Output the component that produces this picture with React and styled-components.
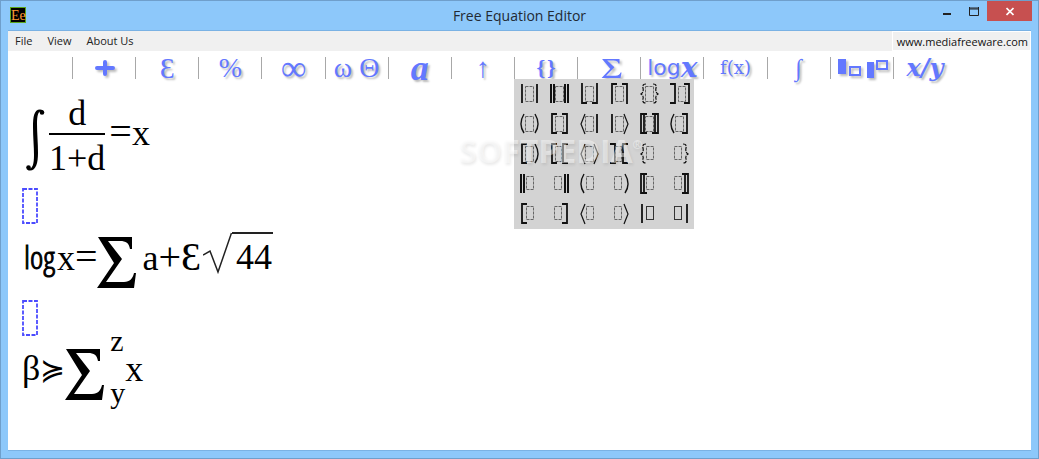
import React from "react";
import styled, { createGlobalStyle } from "styled-components";

const Global = createGlobalStyle`
  * { box-sizing: border-box; }
  html, body, #root { height: 100%; }
  body { margin: 0; font-family: "Open Sans", sans-serif; }
  button { font: inherit; }
`;

const Window = styled.div`
  min-height: 100%;
  display: flex;
  flex-direction: column;
  background: #8dc8fa;
  border: 1px solid #6f9fcb;
  padding: 0 7px 7px;
`;

const TitleBar = styled.header`
  display: grid;
  grid-template-columns: 1fr auto 1fr;
  height: 29px;
  flex: none;
`;

const AppIcon = styled.svg`
  margin: 6px 0 0 2px;
`;

const Title = styled.h1`
  margin: 0;
  font-size: 14px;
  font-weight: 400;
  line-height: 29px;
  color: #222a33;
`;

const WindowButtons = styled.div`
  display: flex;
  justify-content: flex-end;
  align-items: flex-start;
  margin-right: -1px;
`;

const WindowButton = styled.button`
  width: ${(p) => (p.$close ? 45 : 27)}px;
  height: 20px;
  padding: 0;
  border: 0;
  background: ${(p) => (p.$close ? "#c75050" : "transparent")};
  svg { display: block; margin: 0 auto; }
`;

const Client = styled.main`
  flex: 1;
  background: #fff;
  border: 1px solid #7ab2e4;
  border-width: 1px 0;
`;

const MenuBar = styled.nav`
  display: flex;
  gap: 1px;
  height: 20px;
  background: #f0f0f0;
`;

const MenuButton = styled.button`
  border: 0;
  padding: 0 7px;
  background: none;
  font-size: 11px;
  line-height: 20px;
  color: #222;
`;

const SiteLink = styled.a`
  margin-left: auto;
  padding: 0 2px 0 4px;
  border: 1px solid #fff;
  font-size: 11px;
  line-height: 20px;
  color: #111;
  text-decoration: none;
`;

const ToolBar = styled.div`
  display: flex;
  padding: 6px 75px 0 64px;
`;

const ToolSlot = styled.div`
  position: relative;
  flex: 1 1 0;
  min-width: 0;
  border-left: 1px solid #a8a8a8;
`;

const ToolButton = styled.button`
  display: flex;
  align-items: center;
  justify-content: center;
  width: 100%;
  height: 22px;
  padding: 0;
  border: 0;
  background: none;
  color: #6378ff;
  svg { overflow: visible; filter: drop-shadow(2px 2px 1px #0004); }
`;

const ToolText = styled.span`
  font-family: ${(p) => p.$font || '"Liberation Serif"'}, serif;
  font-size: ${(p) => p.$size || 24}px;
  font-weight: ${(p) => (p.$bold ? 700 : 400)};
  font-style: ${(p) => (p.$italic ? "italic" : "normal")};
  line-height: 20px;
  white-space: nowrap;
  text-shadow: 2px 2px 2px #0004;
`;

const Palette = styled.div`
  position: absolute;
  z-index: 1;
  top: 100%;
  left: -1px;
  display: grid;
  grid-template-columns: repeat(6, 30px);
  background: #d3d3d3;
`;

const PaletteButton = styled.button`
  width: 30px;
  height: 30px;
  padding: 0;
  border: 0;
  background: none;
  svg { display: block; }
`;

const Watermark = styled.div`
  position: absolute;
  z-index: 2;
  top: 74px;
  left: -56px;
  font-family: "Open Sans", sans-serif;
  font-size: 32px;
  font-weight: 700;
  line-height: 40px;
  white-space: nowrap;
  color: #ffffff70;
  text-shadow: 1px 2px 3px #00000016;
  pointer-events: none;
  sup { font-size: 12px; line-height: 12px; vertical-align: 14px; }
`;

const Sheet = styled.section`
  display: flex;
  flex-direction: column;
  align-items: flex-start;
  padding: 7px 14px;
  font-family: "Liberation Serif", serif;
  font-size: 36px;
  line-height: 36px;
  color: #000;
`;

const Equation = styled.div`
  display: flex;
  align-items: center;
  height: ${(p) => (p.$tall ? 102 : 76)}px;
  svg { display: block; flex: none; }
`;

const Term = styled.span`
  padding-bottom: 10px;
  white-space: nowrap;
`;

const Operator = styled.span`
  font-size: ${(p) => (p.$small ? 30 : 40)}px;
  line-height: 36px;
`;

const Fraction = styled.div`
  display: flex;
  flex-direction: column;
  align-items: center;
  margin: 0 4px 0 1px;
  line-height: 40px;
`;

const Denominator = styled.span`
  border-top: 2px solid #000;
  line-height: 46px;
`;

const Limits = styled.span`
  display: flex;
  flex-direction: column;
  justify-content: space-between;
  font-size: 30px;
  line-height: 30px;
  height: 96px;
  padding-bottom: 14px;
`;

const BigOperator = styled.svg`
  margin-right: 6px;
`;

const Root = styled.span`
  display: flex;
  height: 60px;
  padding-bottom: 18px;
  margin-left: 2px;
`;

const Radicand = styled.span`
  padding: 5px 1px 0 4px;
  border-top: 2px solid #222;
`;

const Log = styled.span`
  padding: 0 2px 10px;
  font-family: "Open Sans Condensed Light", "Open Sans Condensed", sans-serif;
  font-size: 32px;
  font-weight: 300;
  -webkit-text-stroke: 1px #000;
`;

const sigmaPath =
  "M1 0H35V12H33C32 6 29 4 23 4H11L25 22 9 45H27C33 45 36 41 37 36H39L37 51H0L17 26Z";

function Sigma() {
  return (
    <BigOperator width="39" height="51" viewBox="0 0 39 51" aria-label="sum">
      <path d={sigmaPath} />
    </BigOperator>
  );
}

function Placeholder() {
  return (
    <svg width="16" height="36" viewBox="0 0 16 36" aria-label="empty line">
      <rect x="1" y="1" width="14" height="34" fill="none" stroke="#4b4bff" strokeWidth="1.8" strokeDasharray="4 1.5" />
    </svg>
  );
}

const leftX = 8;
const rightX = 23;

function bracket(kind, x, side) {
  const s = side === "l" ? 1 : -1;
  switch (kind) {
    case "|":
      return <path d={`M${x} 5V24`} />;
    case "||":
      return <path d={`M${x - s} 5V24M${x + 2 * s} 5V24`} strokeWidth="2" />;
    case "[":
      return <path d={`M${x + 5} 5H${x}V24H${x + 5}`} />;
    case "]":
      return <path d={`M${x - 5} 5H${x}V24H${x - 5}`} />;
    case "floor":
      return <path d={`M${x} 4V24H${x + 5 * s}`} />;
    case "ceil":
      return <path d={`M${x} 25V5H${x + 5 * s}`} />;
    case "[[":
      return <path d={`M${x + 5 * s} 5H${x - s}V24H${x + 5 * s}M${x + 2 * s} 5V24`} />;
    case "(":
      return <path d={`M${x + 2 * s} 5Q${x - 4 * s} 15 ${x + 2 * s} 24`} strokeWidth="1.4" />;
    case "<":
      return <path d={`M${x + 3 * s} 5L${x - s} 15L${x + 3 * s} 25`} strokeWidth="1.2" />;
    default:
      return (
        <path
          d={`M${x + 4 * s} 5Q${x} 5 ${x + s} 9Q${x + 2 * s} 13 ${x - s} 15Q${x + 2 * s} 17 ${x + s} 20Q${x} 24 ${x + 4 * s} 24`}
          strokeWidth="1.2"
          strokeDasharray="4 1"
        />
      );
  }
}

const palette = [
  ["|", "|"], ["||", "||"], ["floor", "floor"], ["ceil", "ceil"], ["{", "{"], ["]", "]"],
  ["(", "("], ["[", "]"], ["<", "|"], ["|", "<"], ["[[", "[["], ["(", "]"],
  ["[", "("], ["[", "["], ["<", "<"], ["]", "["], ["{", null], [null, "{"],
  ["||", null], [null, "||"], ["(", null], [null, "("], ["[[", null], [null, "[["],
  ["[", null], [null, "]"], ["<", null], [null, "<"], ["|", null], [null, "|"],
];

function boxSpan(left, right) {
  if (!right) return [12.5, 7];
  if (!left) return [10.5, 7];
  if (left === "]" && right === "]") return [14.5, 7];
  if (right === "[") return [11.5, 6];
  return [11.5, 8];
}

function Fence({ left, right, solid }) {
  const both = left && right;
  const lx = left === "]" ? 11 : leftX;
  const rx = right === "[" ? 19 : left === "]" ? 25 : rightX;
  const [boxX, boxWidth] = boxSpan(left, right);
  return (
    <svg width="30" height="30" viewBox="0 0 30 30" fill="none" stroke="#111" strokeWidth="1.8">
      {left && bracket(left, lx, "l")}
      {right && bracket(right, rx, "r")}
      <rect
        x={boxX}
        y="7.5"
        width={boxWidth}
        height={both ? 15 : 13}
        stroke={solid ? "#333" : "#666"}
        strokeWidth="1"
        strokeDasharray={solid ? undefined : "3 1"}
      />
    </svg>
  );
}

function Plus() {
  return (
    <svg width="22" height="18" viewBox="0 0 22 18">
      <path d="M12 3V15M4 9H20" stroke="#6378ff" strokeWidth="4" strokeLinecap="round" />
    </svg>
  );
}

function SmallSigma() {
  return (
    <svg width="20" height="19" viewBox="-5 0 39 51" preserveAspectRatio="none">
      <path d={sigmaPath} fill="#6378ff" />
    </svg>
  );
}

function Boxes() {
  return (
    <svg width="50" height="20" viewBox="-1 0 50 20" fill="none" stroke="#6378ff" strokeWidth="2">
      <path d="M0 1H8V16H0ZM29 4H36V20H29Z" fill="#6378ff" stroke="none" />
      <rect x="12" y="9" width="10" height="8" />
      <rect x="39" y="3" width="10" height="8" />
    </svg>
  );
}

const tools = [
  ["Operators", <Plus />],
  ["Letters", <ToolText $size={30}>Ɛ</ToolText>],
  ["Percent", <ToolText $size={28}>%</ToolText>],
  ["Infinity", <ToolText $size={36}>∞</ToolText>],
  ["Greek", <ToolText $size={28}>ω Θ</ToolText>],
  ["Variables", <ToolText $size={36} $bold $italic>a</ToolText>],
  ["Arrows", <ToolText $size={28}>↑</ToolText>],
  ["Brackets", <ToolText $size={22} $bold>{"{\u200a}"}</ToolText>],
  ["Sums", <SmallSigma />],
  [
    "Logarithms",
    <>
      <ToolText $size={22} $font='"DejaVu Sans"'>log</ToolText>
      <ToolText $size={28} $bold $italic $font='"DejaVu Serif"'>x</ToolText>
    </>,
  ],
  ["Functions", <ToolText $size={18} $font='"DejaVu Serif"'>f(x)</ToolText>],
  ["Integrals", <ToolText $size={24} $italic>∫</ToolText>],
  ["Scripts", <Boxes />],
  ["Fractions", <ToolText $size={24} $bold $italic $font='"DejaVu Serif"'>x/y</ToolText>],
];

export default function App() {
  return (
    <>
      <Global />
      <Window>
        <TitleBar>
          <AppIcon width="16" height="16" viewBox="0 0 16 16">
            <rect x=".5" y=".5" width="15" height="15" fill="#000" stroke="#5ba51a" />
            <text x="1" y="13" fontFamily="Liberation Serif, serif" fontSize="14" fill="#ff9a35">Ee</text>
          </AppIcon>
          <Title>Free Equation Editor</Title>
          <WindowButtons>
            <WindowButton aria-label="Minimize">
              <svg width="8" height="20"><path d="M0 13H8" stroke="#222" strokeWidth="2" /></svg>
            </WindowButton>
            <WindowButton aria-label="Maximize">
              <svg width="10" height="20"><path d="M.5 6V14.500H9.500V6M0 7H10M0 8H10" fill="none" stroke="#222" /></svg>
            </WindowButton>
            <WindowButton $close aria-label="Close">
              <svg width="8" height="20"><path d="M.5 7L7.500 14M7.500 7L.5 14" stroke="#fff" strokeWidth="1.700" /></svg>
            </WindowButton>
          </WindowButtons>
        </TitleBar>
        <Client>
          <MenuBar>
            <MenuButton>File</MenuButton>
            <MenuButton>View</MenuButton>
            <MenuButton>About Us</MenuButton>
            <SiteLink href="#site">www.mediafreeware.com</SiteLink>
          </MenuBar>
          <ToolBar>
            {tools.map(([name, icon]) => (
              <ToolSlot key={name}>
                <ToolButton aria-label={name}>{icon}</ToolButton>
                {name === "Brackets" && (
                  <>
                    <Palette>
                      {palette.map(([l, r], i) => (
                        <PaletteButton key={i} aria-label={`Bracket ${i + 1}`}>
                          <Fence left={l} right={r} solid={i > 27} />
                        </PaletteButton>
                      ))}
                    </Palette>
                    <Watermark>SOFTPEDIA<sup>®</sup></Watermark>
                  </>
                )}
              </ToolSlot>
            ))}
          </ToolBar>
          <Sheet>
            <Equation $tall>
              <svg width="26" height="68" viewBox="0 -6 26 68" aria-label="integral">
                <path d="M22 4C22 1.500 20 .5 18 .5C12 .5 11 8 11 18C11 28 12 38 12 46C12 55 10.500 59.500 7.500 59.500L5 59C5 61 6 61.500 8 61.500C14 61.500 16 54 16 44C16 34 15 24 15 15C15 6 16.500 2.500 18.500 2.500Z" />
                <circle cx="20" cy="3.500" r="2.300" />
                <circle cx="6.500" cy="58.500" r="2.300" />
              </svg>
              <Fraction>
                <span>d</span>
                <Denominator>1+d</Denominator>
              </Fraction>
              <Term><Operator>=</Operator>x</Term>
            </Equation>
            <Placeholder />
            <Equation>
              <Log>log</Log>
              <Term>x<Operator>=</Operator></Term>
              <Sigma />
              <Term>a<Operator>+Ɛ</Operator></Term>
              <Root>
                <svg width="29" height="42" viewBox="0 0 29 42">
                  <path d="M0 23L7 19L15 40L28.500 1" fill="none" stroke="#222" strokeWidth="1.500" />
                </svg>
                <Radicand>44</Radicand>
              </Root>
            </Equation>
            <Placeholder />
            <Equation>
              <Term>β<Operator $small>≽</Operator></Term>
              <Sigma />
              <Limits><span>z</span><span>y</span></Limits>
              <Term>x</Term>
            </Equation>
          </Sheet>
        </Client>
      </Window>
    </>
  );
}
